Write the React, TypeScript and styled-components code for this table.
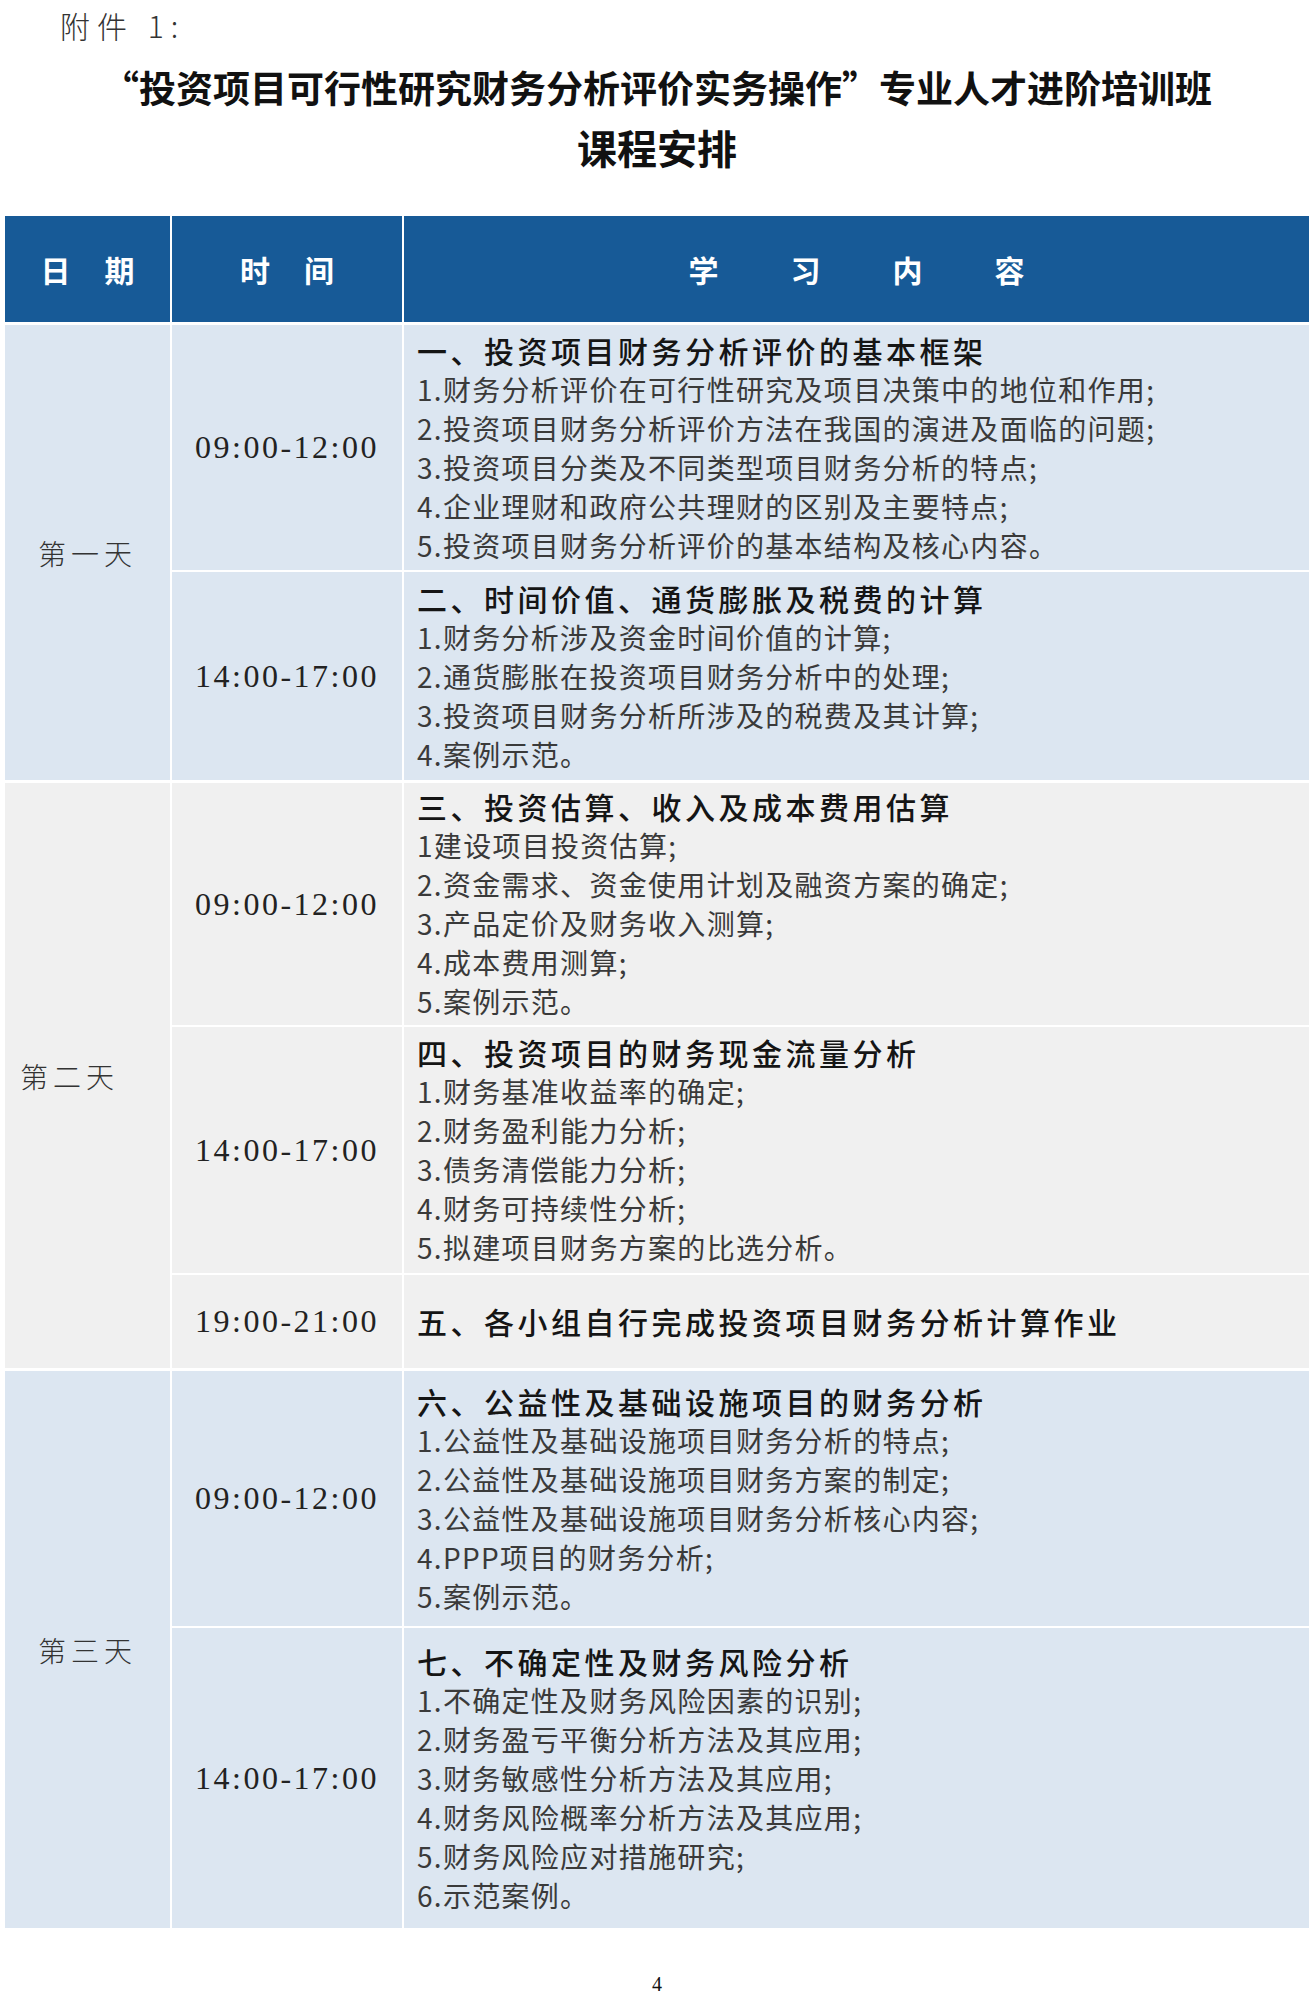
import React from "react";
import styled, { createGlobalStyle } from "styled-components";

const Global = createGlobalStyle`
  html, body { margin: 0; padding: 0; background: #ffffff; }
  body { font-family: "Noto Sans CJK SC", "Noto Sans", sans-serif; color: #222; }
`;

const Page = styled.div`
  width: 1314px;
  box-sizing: border-box;
  padding: 0 5px;
`;

const Attachment = styled.div`
  font-family: "Noto Sans CJK SC", serif;
  font-size: 30px;
  font-weight: 300;
  line-height: 50px;
  letter-spacing: 7px;
  color: #333;
  padding-left: 55px;
`;

const Title = styled.h1`
  margin: 7px 0 0;
  font-family: "Noto Sans CJK SC", sans-serif;
  font-weight: 700;
  text-align: center;
  color: #111;
`;

const TitleLine = styled.div<{ $size: number }>`
  font-size: ${(p) => p.$size}px;
  line-height: 60px;
`;

const Table = styled.div`
  margin-top: 39px;
  display: flex;
  flex-direction: column;
  gap: 3px;
`;

const Grid = styled.div`
  display: grid;
  grid-template-columns: 165px 230px 1fr;
  gap: 2px;
`;

const HeadCell = styled.div<{ $spacing: number }>`
  background: #175a97;
  height: 106px;
  display: flex;
  align-items: center;
  justify-content: center;
  color: #fff;
  font-size: 30px;
  font-weight: 700;
  letter-spacing: ${(p) => p.$spacing}px;
  padding-left: ${(p) => p.$spacing}px;
  white-space: pre;
`;

const DayCell = styled.div<{ $bg: string; $rows: number; $shift: number }>`
  background: ${(p) => p.$bg};
  grid-row: span ${(p) => p.$rows};
  display: flex;
  align-items: center;
  justify-content: center;
  padding-right: ${(p) => p.$shift}px;
  font-size: 28px;
  font-weight: 300;
  letter-spacing: 5px;
  color: #333;
`;

const TimeCell = styled.div<{ $bg: string }>`
  background: ${(p) => p.$bg};
  display: flex;
  align-items: center;
  justify-content: center;
  font-family: "Liberation Serif", serif;
  font-size: 32px;
  letter-spacing: 2.5px;
  color: #222;
`;

const ContentCell = styled.div<{ $bg: string; $h: number }>`
  background: ${(p) => p.$bg};
  min-height: ${(p) => p.$h}px;
  box-sizing: border-box;
  display: flex;
  flex-direction: column;
  justify-content: center;
  padding-left: 13px;
`;

const Topic = styled.div`
  font-size: 30px;
  font-weight: 500;
  line-height: 39px;
  letter-spacing: 3.5px;
  color: #151515;
`;

const Item = styled.div`
  font-size: 28px;
  font-weight: 400;
  line-height: 39px;
  letter-spacing: 1.3px;
  color: #3a3a3a;
`;

const PageNo = styled.div`
  padding-top: 44px;
  text-align: center;
  font-family: "Liberation Serif", serif;
  font-size: 20px;
  line-height: 24px;
  color: #111;
`;

type Session = { time: string; h: number; topic: string; items: string[] };
type Day = { label: string; bg: string; shift: number; sessions: Session[] };

const BLUE_BG = "#dce6f1";
const GRAY_BG = "#f0f0f0";

const days: Day[] = [
  {
    label: "第一天",
    bg: BLUE_BG,
    shift: 0,
    sessions: [
      {
        time: "09:00-12:00",
        h: 245,
        topic: "一、投资项目财务分析评价的基本框架",
        items: [
          "1.财务分析评价在可行性研究及项目决策中的地位和作用;",
          "2.投资项目财务分析评价方法在我国的演进及面临的问题;",
          "3.投资项目分类及不同类型项目财务分析的特点;",
          "4.企业理财和政府公共理财的区别及主要特点;",
          "5.投资项目财务分析评价的基本结构及核心内容。",
        ],
      },
      {
        time: "14:00-17:00",
        h: 208,
        topic: "二、时间价值、通货膨胀及税费的计算",
        items: [
          "1.财务分析涉及资金时间价值的计算;",
          "2.通货膨胀在投资项目财务分析中的处理;",
          "3.投资项目财务分析所涉及的税费及其计算;",
          "4.案例示范。",
        ],
      },
    ],
  },
  {
    label: "第二天",
    bg: GRAY_BG,
    shift: 36,
    sessions: [
      {
        time: "09:00-12:00",
        h: 242,
        topic: "三、投资估算、收入及成本费用估算",
        items: [
          "1建设项目投资估算;",
          "2.资金需求、资金使用计划及融资方案的确定;",
          "3.产品定价及财务收入测算;",
          "4.成本费用测算;",
          "5.案例示范。",
        ],
      },
      {
        time: "14:00-17:00",
        h: 246,
        topic: "四、投资项目的财务现金流量分析",
        items: [
          "1.财务基准收益率的确定;",
          "2.财务盈利能力分析;",
          "3.债务清偿能力分析;",
          "4.财务可持续性分析;",
          "5.拟建项目财务方案的比选分析。",
        ],
      },
      {
        time: "19:00-21:00",
        h: 93,
        topic: "五、各小组自行完成投资项目财务分析计算作业",
        items: [],
      },
    ],
  },
  {
    label: "第三天",
    bg: BLUE_BG,
    shift: 0,
    sessions: [
      {
        time: "09:00-12:00",
        h: 255,
        topic: "六、公益性及基础设施项目的财务分析",
        items: [
          "1.公益性及基础设施项目财务分析的特点;",
          "2.公益性及基础设施项目财务方案的制定;",
          "3.公益性及基础设施项目财务分析核心内容;",
          "4.PPP项目的财务分析;",
          "5.案例示范。",
        ],
      },
      {
        time: "14:00-17:00",
        h: 300,
        topic: "七、不确定性及财务风险分析",
        items: [
          "1.不确定性及财务风险因素的识别;",
          "2.财务盈亏平衡分析方法及其应用;",
          "3.财务敏感性分析方法及其应用;",
          "4.财务风险概率分析方法及其应用;",
          "5.财务风险应对措施研究;",
          "6.示范案例。",
        ],
      },
    ],
  },
];

export default function App() {
  return (
    <Page>
      <Global />
      <Attachment>附件 1:</Attachment>
      <Title>
        <TitleLine $size={37}>
          “投资项目可行性研究财务分析评价实务操作”专业人才进阶培训班
        </TitleLine>
        <TitleLine $size={40}>课程安排</TitleLine>
      </Title>
      <Table>
        <Grid>
          <HeadCell $spacing={2}>日　期</HeadCell>
          <HeadCell $spacing={2}>时　间</HeadCell>
          <HeadCell $spacing={4}>学　　习　　内　　容</HeadCell>
        </Grid>
        {days.map((d) => (
          <Grid key={d.label}>
            <DayCell $bg={d.bg} $rows={d.sessions.length} $shift={d.shift}>
              {d.label}
            </DayCell>
            {d.sessions.map((s) => (
              <React.Fragment key={s.topic}>
                <TimeCell $bg={d.bg}>{s.time}</TimeCell>
                <ContentCell $bg={d.bg} $h={s.h}>
                  <Topic>{s.topic}</Topic>
                  {s.items.map((it) => (
                    <Item key={it}>{it}</Item>
                  ))}
                </ContentCell>
              </React.Fragment>
            ))}
          </Grid>
        ))}
      </Table>
      <PageNo>4</PageNo>
    </Page>
  );
}
